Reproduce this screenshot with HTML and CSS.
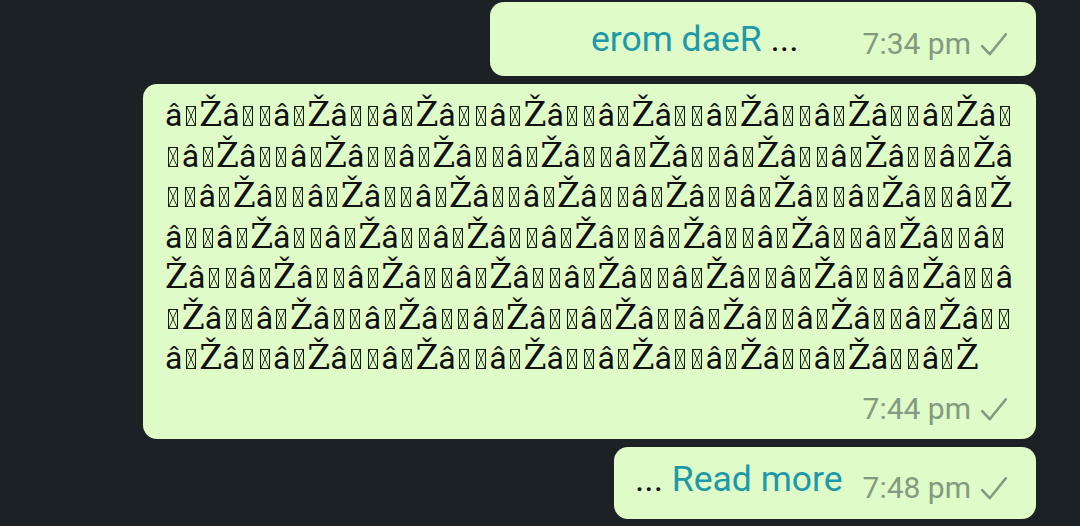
FILE: index.html
```html
<!DOCTYPE html>
<html>
<head>
<meta charset="utf-8">
<link rel="stylesheet" href="styles.css">
</head>
<body>
<div class="chat">
  <div class="bubble short first">
    <span class="msg-line rtl"><span class="link">erom daeR</span> ...</span>
    <span class="meta">7:34 pm <svg class="tick" viewBox="0 0 26 26"><path d="M2 15 L9 22.5 L24 4"/></svg></span>
  </div>
  <div class="bubble long">
    <div class="txt">â<i></i><b>Ž</b>â<i></i><i></i>â<i></i><b>Ž</b>â<i></i><i></i>â<i></i><b>Ž</b>â<i></i><i></i>â<i></i><b>Ž</b>â<i></i><i></i>â<i></i><b>Ž</b>â<i></i><i></i>â<i></i><b>Ž</b>â<i></i><i></i>â<i></i><b>Ž</b>â<i></i><i></i>â<i></i><b>Ž</b>â<i></i><br><i></i>â<i></i><b>Ž</b>â<i></i><i></i>â<i></i><b>Ž</b>â<i></i><i></i>â<i></i><b>Ž</b>â<i></i><i></i>â<i></i><b>Ž</b>â<i></i><i></i>â<i></i><b>Ž</b>â<i></i><i></i>â<i></i><b>Ž</b>â<i></i><i></i>â<i></i><b>Ž</b>â<i></i><i></i>â<i></i><b>Ž</b>â<br><i></i><i></i>â<i></i><b>Ž</b>â<i></i><i></i>â<i></i><b>Ž</b>â<i></i><i></i>â<i></i><b>Ž</b>â<i></i><i></i>â<i></i><b>Ž</b>â<i></i><i></i>â<i></i><b>Ž</b>â<i></i><i></i>â<i></i><b>Ž</b>â<i></i><i></i>â<i></i><b>Ž</b>â<i></i><i></i>â<i></i><b>Ž</b><br>â<i></i><i></i>â<i></i><b>Ž</b>â<i></i><i></i>â<i></i><b>Ž</b>â<i></i><i></i>â<i></i><b>Ž</b>â<i></i><i></i>â<i></i><b>Ž</b>â<i></i><i></i>â<i></i><b>Ž</b>â<i></i><i></i>â<i></i><b>Ž</b>â<i></i><i></i>â<i></i><b>Ž</b>â<i></i><i></i>â<i></i><br><b>Ž</b>â<i></i><i></i>â<i></i><b>Ž</b>â<i></i><i></i>â<i></i><b>Ž</b>â<i></i><i></i>â<i></i><b>Ž</b>â<i></i><i></i>â<i></i><b>Ž</b>â<i></i><i></i>â<i></i><b>Ž</b>â<i></i><i></i>â<i></i><b>Ž</b>â<i></i><i></i>â<i></i><b>Ž</b>â<i></i><i></i>â<br><i></i><b>Ž</b>â<i></i><i></i>â<i></i><b>Ž</b>â<i></i><i></i>â<i></i><b>Ž</b>â<i></i><i></i>â<i></i><b>Ž</b>â<i></i><i></i>â<i></i><b>Ž</b>â<i></i><i></i>â<i></i><b>Ž</b>â<i></i><i></i>â<i></i><b>Ž</b>â<i></i><i></i>â<i></i><b>Ž</b>â<i></i><i></i><br>â<i></i><b>Ž</b>â<i></i><i></i>â<i></i><b>Ž</b>â<i></i><i></i>â<i></i><b>Ž</b>â<i></i><i></i>â<i></i><b>Ž</b>â<i></i><i></i>â<i></i><b>Ž</b>â<i></i><i></i>â<i></i><b>Ž</b>â<i></i><i></i>â<i></i><b>Ž</b>â<i></i><i></i>â<i></i><b>Ž</b></div>
    <div class="meta-row"><span class="meta">7:44 pm <svg class="tick" viewBox="0 0 26 26"><path d="M2 15 L9 22.5 L24 4"/></svg></span></div>
  </div>
  <div class="bubble short last">
    <span class="msg-line">... <span class="link">Read more</span></span>
    <span class="meta">7:48 pm <svg class="tick" viewBox="0 0 26 26"><path d="M2 15 L9 22.5 L24 4"/></svg></span>
  </div>
</div>
</body>
</html>
```

FILE: styles.css
```css
html, body {
  margin: 0;
  padding: 0;
  background: #1b2124;
  height: 100%;
}

.chat {
  display: flex;
  flex-direction: column;
  align-items: flex-end;
  gap: 8px;
  padding: 2px 44px 0 0;
  font-family: Roboto, "Noto Sans", sans-serif;
}

.bubble {
  background: #dffbc7;
  border-radius: 14px;
  box-sizing: border-box;
}

.short {
  display: flex;
  align-items: center;
  height: 72px;
  padding: 0 28px 0 21px;
}

.first {
  width: 546px;
  height: 74px;
}

.msg-line {
  font-size: 35.5px;
  line-height: 40px;
  color: #111;
  white-space: nowrap;
}

.rtl {
  margin-left: auto;
  margin-right: 44px;
}

.last .msg-line {
  margin-bottom: 7px;
}

.link {
  color: #1e99a8;
}

.meta {
  display: inline-flex;
  align-items: center;
  gap: 9px;
  font-size: 30px;
  line-height: 36px;
  color: #849981;
  white-space: nowrap;
  padding-top: 10px;
}

.short .meta {
  margin-left: 20px;
}

.tick {
  width: 28px;
  height: 28px;
  fill: none;
  stroke: #849981;
  stroke-width: 2.4;
  stroke-linecap: round;
  stroke-linejoin: round;
}

.long {
  width: 893px;
  padding: 11px 28px 12px 22px;
}

.txt {
  font-size: 32px;
  line-height: 40.5px;
  color: #111;
  white-space: nowrap;
}

.txt b {
  font-family: "DejaVu Serif", serif;
  font-weight: normal;
  font-size: 33px;
}

.txt i {
  display: inline-block;
  box-sizing: border-box;
  width: 10px;
  height: 20px;
  margin: 0 3.4px;
  border: 1.4px solid #141d0c;
  background:
    linear-gradient(to top right, transparent calc(50% - 0.8px), #141d0c 50%, transparent calc(50% + 0.8px)),
    linear-gradient(to bottom right, transparent calc(50% - 0.8px), #141d0c 50%, transparent calc(50% + 0.8px));
}

.meta-row {
  display: flex;
  justify-content: flex-end;
  margin-top: 12px;
}

.meta-row .meta {
  padding-top: 0;
}
```
